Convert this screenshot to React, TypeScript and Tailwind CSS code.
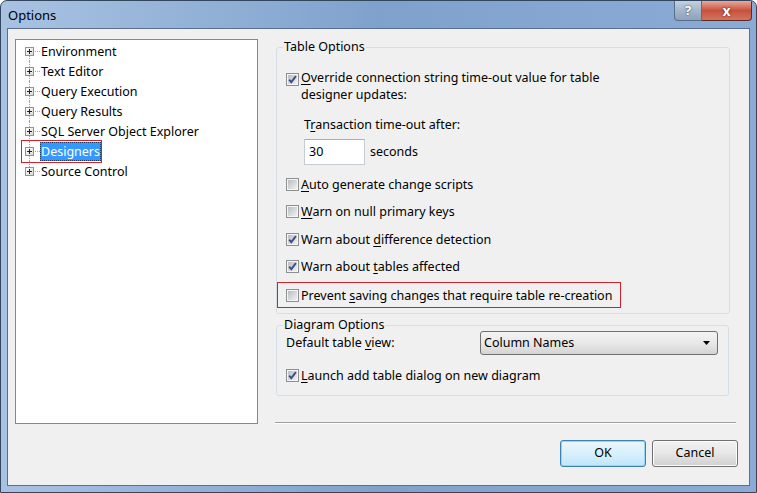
import React from 'react';

const treeItems = [
  'Environment',
  'Text Editor',
  'Query Execution',
  'Query Results',
  'SQL Server Object Explorer',
  'Designers',
  'Source Control',
];

function CheckBox({ checked }: { checked?: boolean }) {
  return (
    <svg width="13" height="13" viewBox="0 0 13 13" className="shrink-0">
      <defs>
        <linearGradient id="cbfill" x1="0" y1="0" x2="1" y2="1">
          <stop offset="0" stopColor="#b9bdc2" />
          <stop offset="1" stopColor="#f1f1f1" />
        </linearGradient>
      </defs>
      <rect x="0.5" y="0.5" width="12" height="12" fill="#f5f5f5" stroke="#8e8f8f" />
      <rect x="2" y="2" width="9" height="9" fill="url(#cbfill)" />
      {checked && (
        <path d="M3.2 6.6 L5.3 9.2 L9.9 3.2" fill="none" stroke="#3b4f87" strokeWidth="1.9" />
      )}
    </svg>
  );
}

function PlusBox() {
  return (
    <svg width="9" height="9" viewBox="0 0 9 9" className="shrink-0">
      <defs>
        <linearGradient id="pbfill" x1="0" y1="0" x2="1" y2="1">
          <stop offset="0" stopColor="#ffffff" />
          <stop offset="1" stopColor="#d8d8d8" />
        </linearGradient>
      </defs>
      <rect x="0.5" y="0.5" width="8" height="8" fill="url(#pbfill)" stroke="#929292" />
      <path d="M2 4.5 H7 M4.5 2 V7" stroke="#202020" strokeWidth="1" />
    </svg>
  );
}

function CheckRow({ checked, children }: { checked?: boolean; children: React.ReactNode }) {
  return (
    <div className="flex h-[27.5px] items-center gap-[2px]">
      <CheckBox checked={checked} />
      <span className="leading-[17px]">{children}</span>
    </div>
  );
}

function Key({ children }: { children: React.ReactNode }) {
  return <u className="underline-offset-2">{children}</u>;
}

export default function App() {
  return (
    <div className="relative flex h-[493px] w-[757px] flex-col overflow-hidden rounded-t-[7px] border border-[#34465e] bg-linear-to-r from-[#a8c2e2] via-[#7fa2cc] to-[#8aabd5] font-['Noto_Sans',sans-serif] text-[12.5px] text-black">
      {/* title bar */}
      <div className="flex h-[27px] shrink-0">
        <div className="pl-[7px] pt-[5px] text-[13px] leading-[18px] text-[#000]">Options</div>
        <div className="ml-auto mr-[4px] flex h-[20px] self-start">
          <div className="flex w-[28px] items-center justify-center rounded-bl-[4px] border border-t-0 border-[#5b6e89] bg-linear-to-b from-[#c3d2e4] via-[#a3b6cc] to-[#8da3bd] text-[13px] font-bold text-white [text-shadow:0_0_2px_#233]">
            ?
          </div>
          <div className="flex w-[50px] items-center justify-center rounded-br-[4px] border border-l-0 border-t-0 border-[#5d2a24] bg-linear-to-b from-[#e9a99c] via-[#c7503d] to-[#d2755e] text-[14px] font-bold leading-none text-white [text-shadow:0_0_2px_#3a1008]">
            x
          </div>
        </div>
      </div>

      {/* client area */}
      <div className="mx-[6px] mb-[6px] flex flex-1 flex-col border border-[#5a6f8e] bg-[#f0f0f0]">
        <div className="flex pl-[7px] pt-[10px]">
          {/* tree */}
          <div className="relative h-[385px] w-[243px] shrink-0 border border-[#828790] bg-white pl-[9px] pt-[1px]">
            {treeItems.map((item, i) => (
              <div key={item} className="flex h-[20px] items-center">
                <div className="flex h-full w-[9px] flex-col items-center">
                  <div className={`flex-1 ${i === 0 ? '' : 'border-l border-dotted border-[#a0a0a0]'}`} />
                  <PlusBox />
                  <div className={`flex-1 ${i === treeItems.length - 1 ? '' : 'border-l border-dotted border-[#a0a0a0]'}`} />
                </div>
                <div className="ml-[1px] w-[5px] border-t border-dotted border-[#a0a0a0]" />
                {item === 'Designers' ? (
                  <span className="h-[19px] border border-dotted border-[#1a3d66] bg-[#3399ff] leading-[17px] text-white">
                    {item}
                  </span>
                ) : (
                  <span className="ml-[1px] leading-[17px]">{item}</span>
                )}
              </div>
            ))}
            {/* annotation box round the selected node */}
            <div className="pointer-events-none absolute left-[5px] top-[100px] h-[23px] w-[81px] border border-[#d3232a]" />
          </div>

          {/* right column */}
          <div className="ml-[17px] flex h-[385px] w-[461px] flex-col">
            <fieldset className="ml-[1px] h-[275px] w-[454px] rounded-[3px] border border-[#d5dfe5]">
              <legend className="ml-[6px] h-[16px] px-[1px] leading-[16px]">Table Options</legend>
              <div className="pl-[9px]">
                <div className="mt-[14px] flex gap-[2px]">
                  <div className="mt-[4px]">
                    <CheckBox checked />
                  </div>
                  <div className="leading-[17px]">
                    <Key>O</Key>verride connection string time-out value for table
                    <br />
                    designer updates:
                  </div>
                </div>
                <div className="ml-[18px] mt-[13px] leading-[17px]">
                  T<Key>r</Key>ansaction time-out after:
                </div>
                <div className="ml-[18px] mt-[6px] flex items-center">
                  <div className="flex h-[26px] w-[61px] items-center border border-[#c5ccd4] border-t-[#abadb3] bg-white pl-[4px]">
                    30
                  </div>
                  <span className="ml-[5px]">seconds</span>
                </div>
                <div className="mt-[5.5px]">
                  <CheckRow>
                    <Key>A</Key>uto generate change scripts
                  </CheckRow>
                  <CheckRow>
                    <Key>W</Key>arn on null primary keys
                  </CheckRow>
                  <CheckRow checked>
                    Warn about <Key>d</Key>ifference detection
                  </CheckRow>
                  <CheckRow checked>
                    Warn about <Key>t</Key>ables affected
                  </CheckRow>
                </div>
                <div className="-ml-[9px] mt-[1.5px] flex h-[26px] w-[344px] items-center gap-[2px] border border-[#d3232a] pl-[8px]">
                  <CheckBox />
                  <span className="leading-[17px]">
                    Prevent <Key>s</Key>aving changes that require table re-creation
                  </span>
                </div>
              </div>
            </fieldset>

            <fieldset className="ml-[1px] mt-[3px] h-[79px] w-[453px] rounded-[3px] border border-[#d5dfe5]">
              <legend className="ml-[6px] h-[16px] px-[1px] leading-[16px]">Diagram Options</legend>
              <div className="pl-[9px]">
                <div className="-mt-[2px] flex h-[24px] items-center">
                  <span className="w-[194px]">
                    Default table <Key>v</Key>iew:
                  </span>
                  <div className="flex h-[24px] w-[238px] items-center rounded-[3px] border border-[#707070] bg-linear-to-b from-[#f4f4f4] via-[#e8e8e8] to-[#d4d4d4] pl-[3px] pr-[7px]">
                    <span>Column Names</span>
                    <svg width="7" height="4" viewBox="0 0 7 4" className="ml-auto">
                      <path d="M0 0 H7 L3.5 4 Z" fill="#000" />
                    </svg>
                  </div>
                </div>
                <div className="mt-[11.5px] flex h-[17px] items-center gap-[2px]">
                  <CheckBox checked />
                  <span className="leading-[17px]">
                    <Key>L</Key>aunch add table dialog on new diagram
                  </span>
                </div>
              </div>
            </fieldset>

            <div className="mt-auto h-[2px] border-t border-b border-t-[#a0a0a0] border-b-white" />
          </div>
        </div>

        {/* buttons */}
        <div className="mt-[16px] flex justify-end gap-[6px] pr-[11px]">
          <button className="flex h-[27px] w-[86px] items-center justify-center rounded-[3px] border border-[#3c7fb1] bg-linear-to-b from-[#eaf6fd] via-[#d9f0fc] to-[#bee6fd] shadow-[inset_0_0_0_1px_#9ad4f3]">
            OK
          </button>
          <button className="flex h-[27px] w-[86px] items-center justify-center rounded-[3px] border border-[#707070] bg-linear-to-b from-[#f2f2f2] via-[#e6e6e6] to-[#d0d0d0] shadow-[inset_0_0_0_1px_#fcfcfc]">
            Cancel
          </button>
        </div>
      </div>
    </div>
  );
}
